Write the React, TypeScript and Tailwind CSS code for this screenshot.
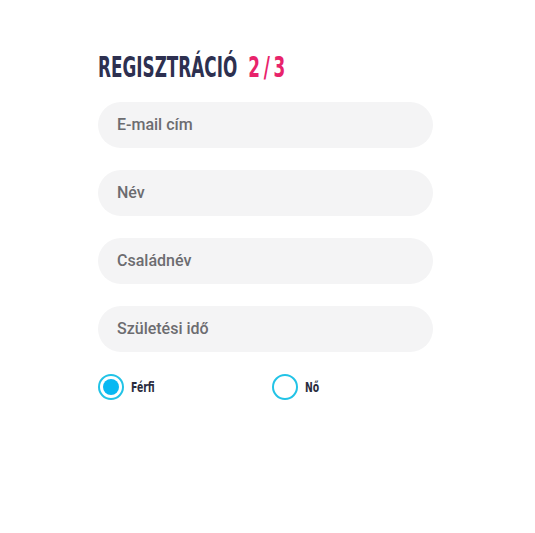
function Field({ label }: { label: string }) {
  return (
    <div className="flex h-[46px] w-[335px] items-center rounded-full bg-[#f4f4f5] px-[19px]">
      <span className="font-['Roboto',sans-serif] text-[16px] font-medium text-[#6c6c70]">{label}</span>
    </div>
  );
}

function Radio({ label, checked }: { label: string; checked?: boolean }) {
  return (
    <label className="flex items-center gap-[7px]">
      <span className="flex size-[26px] items-center justify-center rounded-full border-2 border-[#22c3e6] bg-white">
        {checked && <span className="size-[16px] rounded-full bg-[#08b8f2]" />}
      </span>
      <span className="inline-block origin-left scale-x-[0.74] font-['DejaVu_Sans_Condensed',sans-serif] text-[14px] font-bold text-[#2a2d3e]">
        {label}
      </span>
    </label>
  );
}

export default function App() {
  return (
    <div className="min-h-[533px] w-[535px] bg-white pl-[98px] pt-[52px]">
      <h1 className="flex origin-left scale-x-[0.645] items-baseline gap-[17px] font-['DejaVu_Sans_Condensed',sans-serif] text-[29px] font-bold leading-[30px]">
        <span className="text-[#2d3050]">REGISZTRÁCIÓ</span>
        <span className="tracking-[0.2em] text-[#e8236b]">2/3</span>
      </h1>
      <div className="mt-[20px] flex flex-col gap-[22px]">
        <Field label="E-mail cím" />
        <Field label="Név" />
        <Field label="Családnév" />
        <Field label="Születési idő" />
      </div>
      <div className="mt-[22px] flex">
        <div className="w-[174px]">
          <Radio label="Férfi" checked />
        </div>
        <Radio label="Nő" />
      </div>
    </div>
  );
}
